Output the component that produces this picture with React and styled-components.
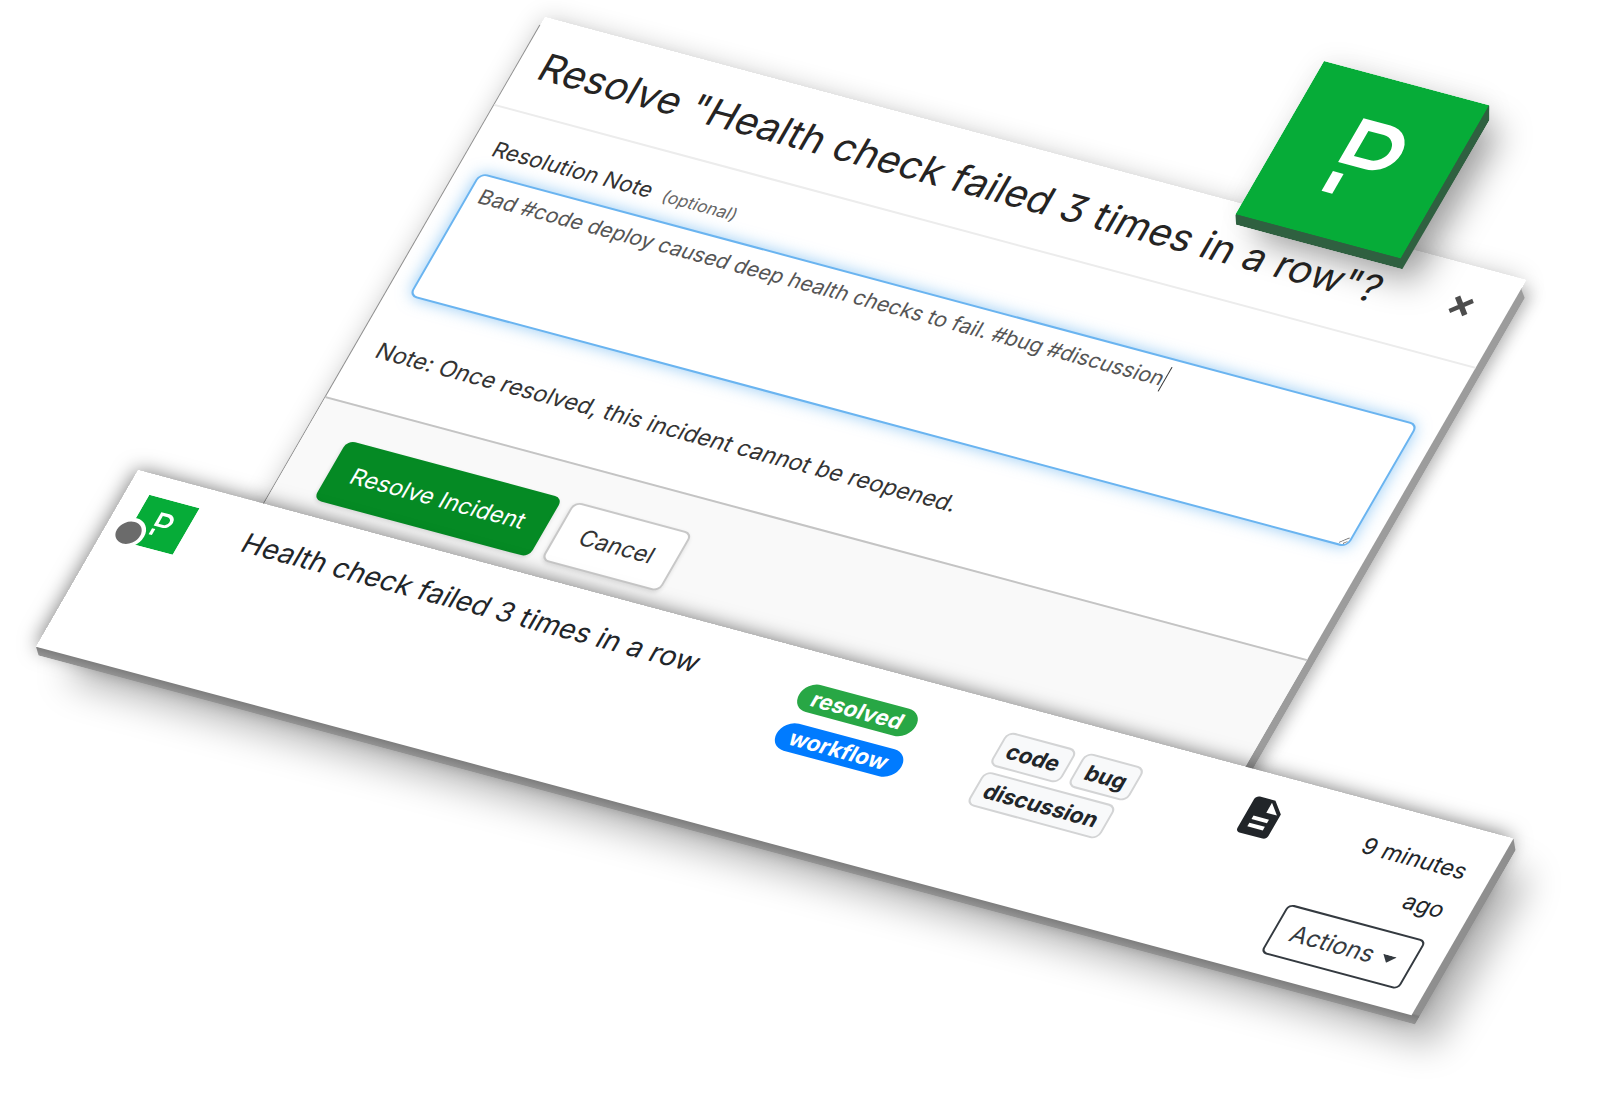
import React, { useState } from "react";
import styled, { createGlobalStyle } from "styled-components";
import { MdDescription } from "react-icons/md";

const GlobalStyle = createGlobalStyle`
  *, *::before, *::after {
    box-sizing: border-box;
  }

  body {
    margin: 0;
    background: #ffffff;
    color: #212529;
    font-family: Inter, "Liberation Sans", sans-serif;
  }
`;

const Stage = styled.main`
  position: relative;
  min-height: 100vh;
  overflow: hidden;
`;

// every card lies on the same tilted plane
const Plane = styled.section`
  position: absolute;
  transform: rotate(15deg) skewX(-15deg);
  transform-origin: 0 0;
`;

// the thickness of a card, seen from its lower right
const Slab = styled.div`
  position: absolute;
  inset: 0 -8px -10px 0;
  background: ${props => props.$color};
  clip-path: ${props => props.$shape};
`;

const DialogPlane = styled(Plane)`
  top: 17px;
  left: 545px;
  width: calc(100vw - 586px);
  box-shadow: 0 0 24px rgba(0, 0, 0, 0.18), 12px 10px 16px rgba(0, 0, 0, 0.26);

  &::before {
    content: "";
    position: absolute;
    inset: 9px 0 0 -1px;
    background: #8c8c8c;
  }
`;

const Dialog = styled.form`
  position: relative;
  background: #ffffff;
`;

const DialogHeader = styled.header`
  display: flex;
  align-items: center;
  justify-content: space-between;
  padding: 24px 34px 25px 22px;
  border-bottom: 2px solid #ececec;
`;

const DialogTitle = styled.h2`
  margin: 0;
  color: #252423;
  font-size: 39px;
  font-weight: 400;
  line-height: 48px;
  white-space: nowrap;
  font-feature-settings: "cv09";
`;

const CloseButton = styled.button`
  display: flex;
  margin-bottom: 12px;
  padding: 0;
  border: 0;
  background: none;
  color: #4d4d4d;
`;

const DialogBody = styled.div`
  display: flex;
  flex-direction: column;
  padding: 28px 22px 44px;
`;

const NoteLabel = styled.label`
  display: flex;
  align-items: baseline;
  gap: 12px;
  margin-bottom: 12px;
  color: #333333;
  font-size: 22px;
  line-height: 26px;
`;

const Optional = styled.span`
  color: #666666;
  font-size: 17px;
`;

const NoteField = styled.div`
  position: relative;
  display: flex;
`;

const NoteInput = styled.textarea`
  width: 100%;
  height: 138px;
  padding: 8px 10px;
  border: 2px solid #6ab4f0;
  border-radius: 8px;
  outline: 0;
  box-shadow: 0 0 16px rgba(82, 168, 236, 0.6);
  color: #555555;
  font-family: inherit;
  font-size: 21px;
  line-height: 26px;
  resize: vertical;
`;

const Caret = styled.span`
  position: absolute;
  top: 9px;
  left: 721px;
  width: 1px;
  height: 27px;
  background: #333333;
`;

const Hint = styled.p`
  margin: 46px 0 0;
  color: #333333;
  font-size: 23px;
  line-height: 28px;
`;

const DialogFooter = styled.footer`
  display: flex;
  gap: 12px;
  padding: 35px 42px 62px;
  border-top: 2px solid #c4c4c4;
  background: #f9f9f9;
`;

const Button = styled.button`
  height: 66px;
  padding: 0 ${props => (props.$primary ? "20px" : "22px")};
  border: 2px solid ${props => (props.$primary ? "#058a24" : "#c8c8c8")};
  border-radius: 8px;
  background: ${props => (props.$primary ? "#058a24" : "#ffffff")};
  box-shadow: 0 2px 4px rgba(0, 0, 0, 0.12);
  color: ${props => (props.$primary ? "#ffffff" : "#333333")};
  font-family: inherit;
  font-size: 23px;
  line-height: 28px;
  white-space: nowrap;
`;

const RowPlane = styled(Plane)`
  top: 470px;
  left: 138px;
  width: calc(100vw - 178px);
  box-shadow: 0 0 20px rgba(0, 0, 0, 0.55), 40px 28px 36px -4px rgba(0, 0, 0, 0.28);
`;

const Row = styled.article`
  position: relative;
  display: grid;
  grid-template-columns: 109px 1fr 206px 248px 48px 188px;
  align-items: start;
  padding: 21px 25px 21px 23px;
  background: #ffffff;
  font-size: 28px;
  line-height: 43px;
`;

const ServiceIcon = styled.div`
  position: relative;
  width: 52px;
  height: 52px;
`;

const StatusDot = styled.span`
  position: absolute;
  top: 26px;
  left: -15px;
  width: 32px;
  height: 32px;
  border: 4px solid #ffffff;
  border-radius: 50%;
  background: #6b6b6b;
`;

const RowTitle = styled.h3`
  margin: 0;
  font-size: 28px;
  font-weight: 400;
  line-height: 43px;
`;

const BadgeColumn = styled.div`
  display: flex;
  flex-direction: column;
  align-items: flex-start;
  gap: 13px;
  padding-top: 10px;
`;

const Pill = styled.span`
  padding: 3px 14px;
  border-radius: 15px;
  background: ${props => props.$color};
  color: #ffffff;
  font-size: 22px;
  font-weight: 700;
  line-height: 24px;
`;

const TagList = styled.div`
  display: flex;
  flex-wrap: wrap;
  gap: 6px 8px;
  width: 150px;
  padding-top: 6px;
`;

const Tag = styled.span`
  padding: 4px 8px;
  border: 2px solid #d3d4d5;
  border-radius: 8px;
  background: #f8f9fa;
  font-size: 22px;
  font-weight: 700;
  line-height: 26px;
`;

const RowAside = styled.div`
  display: flex;
  flex-direction: column;
  align-items: flex-end;
  gap: 11px;
`;

const Age = styled.time`
  width: 120px;
  padding-top: 3px;
  font-size: 23px;
  line-height: 43px;
  text-align: right;
`;

const ActionsButton = styled.button`
  display: flex;
  align-items: center;
  gap: 8px;
  height: 55px;
  padding: 0 16px;
  border: 2px solid #343a40;
  border-radius: 6px;
  background: #ffffff;
  color: #343a40;
  font-family: inherit;
  font-size: 24px;
  line-height: 36px;
`;

const LogoPlane = styled(Plane)`
  top: 61px;
  left: 1324px;
  width: 171px;
  box-shadow: 26px 20px 32px rgba(0, 0, 0, 0.34), 4px 0 28px rgba(0, 0, 0, 0.1);
`;

const Mark = styled.svg`
  position: relative;
  display: block;
  width: 100%;
`;

const ServiceMark = () => (
  <Mark viewBox="0 0 171 171" role="img" aria-label="PagerDuty">
    <rect width="171" height="171" fill="#06ac38" />
    <path
      fill="#ffffff"
      fillRule="evenodd"
      d="M65 45H93A24.500 24.500 0 0 1 93 94H65ZM76 56V84H92A14 14 0 0 0 92 56Z"
    />
    <rect x="65" y="104" width="11" height="22" fill="#ffffff" />
  </Mark>
);

const pills = [
  { label: "resolved", color: "#28a745" },
  { label: "workflow", color: "#007bff" },
];

const tags = ["code", "bug", "discussion"];

const ResolveDialog = () => {
  const [note, setNote] = useState(
    "Bad #code deploy caused deep health checks to fail. #bug #discussion"
  );

  return (
    <DialogPlane>
      <Slab
        $color="#9c9c9c"
        $shape="polygon(calc(100% - 9px) 9px, 100% 18px, 100% 100%, 8px 100%, 0 50%)"
      />
      <Dialog onSubmit={event => event.preventDefault()}>
        <DialogHeader>
          <DialogTitle>Resolve "Health check failed 3 times in a row"?</DialogTitle>
          <CloseButton type="button" aria-label="Close">
            <svg width="22" height="22" viewBox="0 0 22 22">
              <path d="M3 3L19 19M19 3L3 19" stroke="currentColor" strokeWidth="5" />
            </svg>
          </CloseButton>
        </DialogHeader>
        <DialogBody>
          <NoteLabel htmlFor="resolution-note">
            Resolution Note <Optional>(optional)</Optional>
          </NoteLabel>
          <NoteField>
            <NoteInput
              id="resolution-note"
              value={note}
              spellCheck={false}
              onChange={event => setNote(event.target.value)}
            />
            <Caret />
          </NoteField>
          <Hint>Note: Once resolved, this incident cannot be reopened.</Hint>
        </DialogBody>
        <DialogFooter>
          <Button type="submit" $primary>Resolve Incident</Button>
          <Button type="button">Cancel</Button>
        </DialogFooter>
      </Dialog>
    </DialogPlane>
  );
};

const IncidentRow = () => (
  <RowPlane>
    <Slab
      $color="linear-gradient(to bottom, #8f8f8f 94%, #7c7c7c 95%, #9a9a9a)"
      $shape="polygon(calc(100% - 8px) 0, 100% 11px, 100% calc(100% - 2px), 7px calc(100% - 2px), 0 calc(100% - 10px))"
    />
    <Row>
      <ServiceIcon>
        <ServiceMark />
        <StatusDot />
      </ServiceIcon>
      <RowTitle>Health check failed 3 times in a row</RowTitle>
      <BadgeColumn>
        {pills.map(pill => (
          <Pill key={pill.label} $color={pill.color}>{pill.label}</Pill>
        ))}
      </BadgeColumn>
      <TagList>
        {tags.map(tag => (
          <Tag key={tag}>{tag}</Tag>
        ))}
      </TagList>
      <MdDescription size={48} />
      <RowAside>
        <Age>9 minutes ago</Age>
        <ActionsButton type="button">
          Actions
          <svg width="14" height="8" viewBox="0 0 14 8">
            <path d="M0 0H14L7 8Z" fill="currentColor" />
          </svg>
        </ActionsButton>
      </RowAside>
    </Row>
  </RowPlane>
);

const App = () => (
  <Stage>
    <GlobalStyle />
    <ResolveDialog />
    <IncidentRow />
    <LogoPlane>
      <Slab
        $color="#2f6040"
        $shape="polygon(calc(100% - 8px) 0, 100% 15px, calc(100% - 1px) 100%, 6px 100%, 0 calc(100% - 10px))"
      />
      <ServiceMark />
    </LogoPlane>
  </Stage>
);

export default App;
